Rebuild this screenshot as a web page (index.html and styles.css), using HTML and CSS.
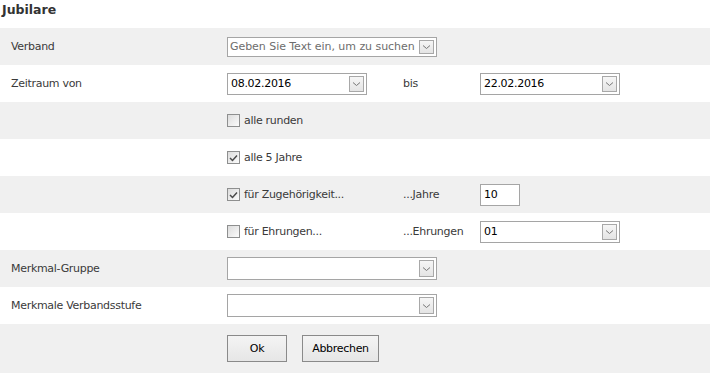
FILE: index.html
```html
<!DOCTYPE html>
<html lang="de">
<head>
    <meta charset="UTF-8">
    <title>Jubilare</title>
    <link rel="stylesheet" href="styles.css">
</head>
<body>
    <h1 class="title">Jubilare</h1>

    <div class="form">
        <!-- Verband -->
        <div class="row alt">
            <label class="label">Verband</label>
            <div class="select wide short placeholder">
                <span class="value">Geben Sie Text ein, um zu suchen</span>
                <span class="arrow"><svg width="9" height="6" viewBox="0 0 9 6"><path d="M1 1.5 L4.5 4.5 L8 1.5" fill="none" stroke="#777" stroke-width="1"/></svg></span>
            </div>
        </div>

        <!-- Zeitraum -->
        <div class="row">
            <label class="label">Zeitraum von</label>
            <div class="select date">
                <span class="value">08.02.2016</span>
                <span class="arrow"><svg width="9" height="6" viewBox="0 0 9 6"><path d="M1 1.5 L4.5 4.5 L8 1.5" fill="none" stroke="#777" stroke-width="1"/></svg></span>
            </div>
            <span class="sublabel">bis</span>
            <div class="select date">
                <span class="value">22.02.2016</span>
                <span class="arrow"><svg width="9" height="6" viewBox="0 0 9 6"><path d="M1 1.5 L4.5 4.5 L8 1.5" fill="none" stroke="#777" stroke-width="1"/></svg></span>
            </div>
        </div>

        <div class="row alt">
            <span class="label"></span>
            <label class="check"><span class="box"></span>alle runden</label>
        </div>

        <div class="row">
            <span class="label"></span>
            <label class="check"><span class="box checked"><svg width="9" height="8" viewBox="0 0 9 8"><path d="M1 4 L3.5 6.5 L8 1.5" fill="none" stroke="#4a4a4a" stroke-width="1.5"/></svg></span>alle 5 Jahre</label>
        </div>

        <div class="row alt">
            <span class="label"></span>
            <label class="check"><span class="box checked"><svg width="9" height="8" viewBox="0 0 9 8"><path d="M1 4 L3.5 6.5 L8 1.5" fill="none" stroke="#4a4a4a" stroke-width="1.5"/></svg></span>für Zugehörigkeit...</label>
            <span class="sublabel">...Jahre</span>
            <div class="textbox">10</div>
        </div>

        <div class="row">
            <span class="label"></span>
            <label class="check"><span class="box"></span>für Ehrungen...</label>
            <span class="sublabel">...Ehrungen</span>
            <div class="select date">
                <span class="value">01</span>
                <span class="arrow"><svg width="9" height="6" viewBox="0 0 9 6"><path d="M1 1.5 L4.5 4.5 L8 1.5" fill="none" stroke="#777" stroke-width="1"/></svg></span>
            </div>
        </div>

        <div class="row alt">
            <label class="label">Merkmal-Gruppe</label>
            <div class="select wide">
                <span class="value"></span>
                <span class="arrow"><svg width="9" height="6" viewBox="0 0 9 6"><path d="M1 1.5 L4.5 4.5 L8 1.5" fill="none" stroke="#777" stroke-width="1"/></svg></span>
            </div>
        </div>

        <div class="row">
            <label class="label">Merkmale Verbandsstufe</label>
            <div class="select wide">
                <span class="value"></span>
                <span class="arrow"><svg width="9" height="6" viewBox="0 0 9 6"><path d="M1 1.5 L4.5 4.5 L8 1.5" fill="none" stroke="#777" stroke-width="1"/></svg></span>
            </div>
        </div>

        <!-- Buttons -->
        <div class="row alt actions">
            <span class="label"></span>
            <div class="buttons">
                <button class="btn ok">Ok</button>
                <button class="btn">Abbrechen</button>
            </div>
        </div>
    </div>
</body>
</html>
```

FILE: styles.css
```css
body {
    margin: 0;
    font-family: "DejaVu Sans", Verdana, sans-serif;
    font-size: 11px;
    letter-spacing: -0.3px;
    color: #3a3a3a;
    background: #fff;
}

.title {
    margin: 0;
    padding: 2px 0 0 2px;
    height: 26px;
    font-size: 12.5px;
    font-weight: bold;
    letter-spacing: 0;
    color: #333;
}

.row {
    display: grid;
    grid-template-columns: 227px 176px 77px 1fr;
    align-items: center;
    height: 37px;
}

.row.alt {
    background-color: #f0f0f0;
}

.label {
    padding-left: 11px;
}

.select {
    display: flex;
    align-items: center;
    height: 22px;
    box-sizing: border-box;
    border: 1px solid #a5a5a5;
    background: #fff;
    color: #000;
    width: 140px;
}

.select.wide {
    grid-column: 2 / 4;
    width: 210px;
    height: 23px;
}

.select.short {
    height: 20px;
}

.select .value {
    flex: 1;
    padding-left: 3px;
    white-space: nowrap;
    overflow: hidden;
}

.select.placeholder .value {
    color: #6d6d6d;
    padding-left: 2px;
    letter-spacing: -0.05px;
}

.select .arrow {
    display: flex;
    align-items: center;
    justify-content: center;
    width: 15px;
    height: calc(100% - 4px);
    margin-right: 2px;
    box-sizing: border-box;
    border: 1px solid #a8a8a8;
    background: linear-gradient(#f6f6f6, #e4e4e4);
}

.check {
    display: flex;
    align-items: center;
    white-space: nowrap;
}

.box {
    display: flex;
    align-items: center;
    justify-content: center;
    width: 13px;
    height: 13px;
    box-sizing: border-box;
    margin-right: 4px;
    border: 1px solid #8e8f8f;
    background: linear-gradient(135deg, #dcdcdc, #fbfbfb);
}

.textbox {
    width: 40px;
    height: 22px;
    box-sizing: border-box;
    border: 1px solid #a5a5a5;
    background: #fff;
    color: #000;
    padding: 3px 0 0 3px;
}

.row.actions {
    height: 49px;
    align-items: start;
}

.buttons {
    display: flex;
    gap: 15px;
    padding-top: 11px;
}

.btn {
    height: 27px;
    box-sizing: border-box;
    border: 1px solid #8a8a8a;
    background: linear-gradient(#f4f4f4, #e6e6e6);
    font-family: "DejaVu Sans", Verdana, sans-serif;
    font-size: 11px;
    font-weight: normal;
    letter-spacing: -0.3px;
    color: #000;
    padding: 0;
}

.btn.ok {
    width: 60px;
}

.btn:not(.ok) {
    width: 77px;
}
```
